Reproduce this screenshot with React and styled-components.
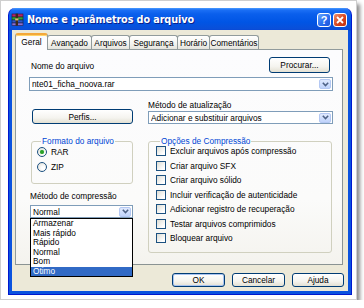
import React from "react";
import styled, { createGlobalStyle, css } from "styled-components";

const GlobalStyle = createGlobalStyle`
  html, body {
    margin: 0;
    padding: 0;
    background: #fff;
  }
  body {
    font-family: "Liberation Sans", Arial, sans-serif;
    font-size: 8.3px;
    color: #000;
  }
  * {
    box-sizing: border-box;
  }
`;

const Frame = styled.div`
  width: 357px;
  height: 300px;
  padding: 7px;
  background: #fff;
  border: 1px solid #cfcfcf;
  box-shadow: 3px 4px 4px rgba(0, 0, 0, 0.45);
`;

const Window = styled.div`
  width: 344px;
  height: 287px;
  display: flex;
  flex-direction: column;
  border-radius: 7px 7px 0 0;
  border: 1px solid #0019cf;
  border-top: none;
  background: linear-gradient(
    to bottom,
    #4a9cff 0,
    #1b6ff5 2px,
    #0a5fec 6px,
    #0055e5 14px,
    #0a4fd8 21px,
    #0847d6 22px,
    #0b53df 23px
  );
`;

const TitleBar = styled.div`
  height: 22px;
  display: flex;
  align-items: center;
  padding: 0 4px 0 2px;
  gap: 3px;
`;

const Title = styled.div`
  flex: 1;
  color: #fff;
  font-family: "DejaVu Sans", sans-serif;
  font-weight: bold;
  font-size: 9.7px;
  letter-spacing: -0.1px;
  text-shadow: 1px 1px 0 #0a1e8a;
  white-space: nowrap;
`;

const CaptionButton = styled.div`
  width: 14px;
  height: 14px;
  border: 1px solid #fff;
  border-radius: 3px;
  display: flex;
  align-items: center;
  justify-content: center;
  color: #fff;
  font-family: "Liberation Sans", sans-serif;
  font-weight: bold;
  font-size: 11px;
  ${({ $close }) =>
    $close
      ? css`
          background: linear-gradient(135deg, #ed8f6f, #d8461f 55%, #c1300c);
        `
      : css`
          background: linear-gradient(135deg, #6aa8ff, #2a6ef0 55%, #1c52d8);
        `}
`;

const Controls = styled.div`
  display: flex;
  gap: 2px;
  margin-top: 1px;
`;

const Body = styled.div`
  flex: 1;
  margin: 0 3px 3px 3px;
  background: #ece9d8;
  padding: 3px 5px 0 3px;
  display: flex;
  flex-direction: column;
`;

const Tabs = styled.div`
  display: flex;
  align-items: flex-end;
  height: 16px;
  position: relative;
  z-index: 2;
`;

const Tab = styled.div`
  width: ${({ $w }) => $w}px;
  height: 14px;
  border: 1px solid #919b9c;
  border-bottom: none;
  border-radius: 3px 3px 0 0;
  background: linear-gradient(#fff, #f3f3ef 60%, #e4e3dc);
  display: flex;
  align-items: center;
  justify-content: center;
  white-space: nowrap;
  margin-right: -1px;
  ${({ $active }) =>
    $active &&
    css`
      height: 17px;
      margin-bottom: -1px;
      background: #fcfcfe;
      border-top: 2px solid #f3a83a;
      box-shadow: inset 0 1px 0 #ffd56a;
      padding-bottom: 2px;
      position: relative;
      z-index: 2;
    `}
`;

const Panel = styled.div`
  width: 328px;
  height: 216px;
  border: 1px solid #919b9c;
  border-right-color: #8a9393;
  border-bottom-color: #8a9393;
  background: linear-gradient(#fcfcfe, #fbfbfa 70%, #f4f3ee);
  padding: 7px 9px 0 14px;
  display: flex;
  flex-direction: column;
`;

const TopRow = styled.div`
  display: flex;
  justify-content: space-between;
  align-items: flex-end;
`;

const Label = styled.div`
  line-height: 10px;
  white-space: nowrap;
  margin-left: ${({ $indent }) => $indent || 0}px;
  margin-bottom: ${({ $below }) => $below || 0}px;
`;

const Button = styled.button`
  width: ${({ $w }) => $w}px;
  height: ${({ $h }) => $h || 14}px;
  padding: 0;
  border: 1px solid #003c74;
  border-radius: 3px;
  background: linear-gradient(#ffffff, #f5f4ef 60%, #e3e0d3);
  font-family: "Liberation Sans", Arial, sans-serif;
  font-size: 8.3px;
  color: #000;
  margin-right: ${({ $mr }) => $mr || 0}px;
  margin-left: ${({ $ml }) => $ml || 0}px;
  ${({ $default }) =>
    $default &&
    css`
      box-shadow: inset 0 0 0 1px #a9c4f0;
    `}
`;

const Select = styled.div`
  height: ${({ $h }) => $h || 14}px;
  border: 1px solid #7f9db9;
  background: #fff;
  display: flex;
  align-items: center;
  padding: 0 1px 0 2px;
  margin-top: ${({ $mt }) => $mt || 0}px;
  margin-left: ${({ $ml }) => $ml || 0}px;
  margin-right: ${({ $mr }) => $mr || 0}px;
  position: relative;
`;

const SelectText = styled.span`
  flex: 1;
  white-space: nowrap;
  overflow: hidden;
`;

const Arrow = styled.div`
  width: 12px;
  height: 10px;
  border: 1px solid #b4c8f3;
  border-radius: 2px;
  background: linear-gradient(#dfe9fe, #c0d3fb);
  display: flex;
  align-items: center;
  justify-content: center;
`;

const Columns = styled.div`
  display: grid;
  grid-template-columns: 103px 185px;
  column-gap: 15px;
  margin-top: ${({ $mt }) => $mt}px;
`;

const Stack = styled.div`
  display: flex;
  flex-direction: column;
`;

const Group = styled.fieldset`
  margin: 0;
  padding: 0 0 0 ${({ $pl }) => $pl}px;
  border: 1px solid #d0d0bf;
  border-radius: 3px;
  height: ${({ $h }) => $h}px;
  margin-left: ${({ $ml }) => $ml || 0}px;
  margin-right: ${({ $mr }) => $mr || 0}px;
  display: flex;
  flex-direction: column;
  gap: ${({ $gap }) => $gap}px;
`;

const Legend = styled.legend`
  color: #0046d5;
  padding: 0 1px;
  margin-left: 4px;
  line-height: 10px;
  margin-bottom: ${({ $mb }) => $mb}px;
`;

const Option = styled.div`
  display: flex;
  align-items: center;
  gap: 4px;
  height: 10px;
  white-space: nowrap;
`;

const RadioMark = styled.span`
  width: 10px;
  height: 10px;
  border-radius: 50%;
  border: 1px solid #1c5180;
  background: radial-gradient(circle at 65% 65%, #fff 20%, #dcdcd4);
  display: flex;
  align-items: center;
  justify-content: center;
  &::after {
    content: "";
    width: 4px;
    height: 4px;
    border-radius: 50%;
    background: ${({ $on }) => ($on ? "#2aa02a" : "transparent")};
    box-shadow: ${({ $on }) => ($on ? "0 0 1px #6fd26f" : "none")};
  }
`;

const CheckMark = styled.span`
  width: 10px;
  height: 10px;
  border: 1px solid #1c5180;
  background: linear-gradient(135deg, #dcdcd4, #fff 80%);
`;

const DropList = styled.div`
  position: absolute;
  top: 12px;
  left: -1px;
  width: 103px;
  border: 1px solid #000;
  background: #fff;
  z-index: 5;
`;

const DropItem = styled.div`
  height: 9.5px;
  line-height: 9.5px;
  padding-left: 2px;
  ${({ $selected }) =>
    $selected &&
    css`
      background: #316ac5;
      color: #fff;
    `}
`;

const ButtonRow = styled.div`
  display: flex;
  justify-content: flex-end;
  gap: 7px;
  margin-top: 8px;
  margin-right: -1px;
`;

const Chevron = () => (
  <svg width="7" height="5" viewBox="0 0 7 5">
    <path d="M0.8 0.8 L3.5 3.6 L6.2 0.8" fill="none" stroke="#4d6185" strokeWidth="1.5" />
  </svg>
);

const RarIcon = () => (
  <svg width="13" height="13" viewBox="0 0 13 13">
    <rect x="1" y="1" width="11" height="3" fill="#b2246e" stroke="#40102a" strokeWidth="0.6" />
    <rect x="1" y="4" width="11" height="3" fill="#2f9d3c" stroke="#123c17" strokeWidth="0.6" />
    <rect x="1" y="7" width="11" height="3" fill="#2d55c4" stroke="#10204a" strokeWidth="0.6" />
    <rect x="1" y="10" width="11" height="2.4" fill="#8b6fd0" stroke="#2a1f4a" strokeWidth="0.6" />
    <rect x="4.6" y="0.6" width="2.4" height="12" fill="#3b2a1a" />
    <rect x="4.2" y="5.4" width="3.2" height="2" fill="#d8c070" />
  </svg>
);

const CloseX = () => (
  <svg width="8" height="8" viewBox="0 0 8 8">
    <path d="M1 1 L7 7 M7 1 L1 7" stroke="#fff" strokeWidth="1.8" />
  </svg>
);

const tabs = [
  ["Geral", 33, true],
  ["Avançado", 45],
  ["Arquivos", 39],
  ["Segurança", 49],
  ["Horário", 33],
  ["Comentários", 50],
];

const checks = [
  "Excluir arquivos após compressão",
  "Criar arquivo SFX",
  "Criar arquivo sólido",
  "Incluir verificação de autenticidade",
  "Adicionar registro de recuperação",
  "Testar arquivos comprimidos",
  "Bloquear arquivo",
];

const methods = ["Armazenar", "Mais rápido", "Rápido", "Normal", "Bom", "Ótimo"];

export default function App() {
  return (
    <>
      <GlobalStyle />
      <Frame>
        <Window>
          <TitleBar>
            <RarIcon />
            <Title>Nome e parâmetros do arquivo</Title>
            <Controls>
              <CaptionButton>?</CaptionButton>
              <CaptionButton $close>
                <CloseX />
              </CaptionButton>
            </Controls>
          </TitleBar>
          <Body>
            <Tabs>
              {tabs.map(([name, w, active]) => (
                <Tab key={name} $w={w} $active={active}>
                  {name}
                </Tab>
              ))}
            </Tabs>
            <Panel>
              <TopRow>
                <Label $indent={1} $below={2}>
                  Nome do arquivo
                </Label>
                <Button $w={61} $h={16} $mr={3}>
                  Procurar...
                </Button>
              </TopRow>
              <Select $mt={4} $ml={-1}>
                <SelectText>nte01_ficha_noova.rar</SelectText>
                <Arrow>
                  <Chevron />
                </Arrow>
              </Select>

              <Columns $mt={9}>
                <Stack>
                  <Button $w={101} $h={15} $ml={2} style={{ marginTop: 9 }}>
                    Perfis...
                  </Button>
                </Stack>
                <Stack>
                  <Label>Método de atualização</Label>
                  <Select $mt={1} $h={13}>
                    <SelectText>Adicionar e substituir arquivos</SelectText>
                    <Arrow>
                      <Chevron />
                    </Arrow>
                  </Select>
                </Stack>
              </Columns>

              <Columns $mt={12}>
                <Stack>
                  <Group $h={48} $pl={5} $gap={5} $ml={1}>
                    <Legend $mb={1}>Formato do arquivo</Legend>
                    <Option>
                      <RadioMark $on />
                      RAR
                    </Option>
                    <Option>
                      <RadioMark />
                      ZIP
                    </Option>
                  </Group>
                  <Label style={{ marginTop: 7 }}>Método de compressão</Label>
                  <Select $mt={4} $h={13}>
                    <SelectText>Normal</SelectText>
                    <Arrow>
                      <Chevron />
                    </Arrow>
                    <DropList>
                      {methods.map((m) => (
                        <DropItem key={m} $selected={m === "Ótimo"}>
                          {m}
                        </DropItem>
                      ))}
                    </DropList>
                  </Select>
                </Stack>
                <Stack>
                  <Group $h={117} $pl={7} $gap={4.5} $mr={1}>
                    <Legend $mb={0}>Opções de Compressão</Legend>
                    {checks.map((c) => (
                      <Option key={c}>
                        <CheckMark />
                        {c}
                      </Option>
                    ))}
                  </Group>
                </Stack>
              </Columns>
            </Panel>
            <ButtonRow>
              <Button $w={53} $default>
                OK
              </Button>
              <Button $w={53}>Cancelar</Button>
              <Button $w={52}>Ajuda</Button>
            </ButtonRow>
          </Body>
        </Window>
      </Frame>
    </>
  );
}
